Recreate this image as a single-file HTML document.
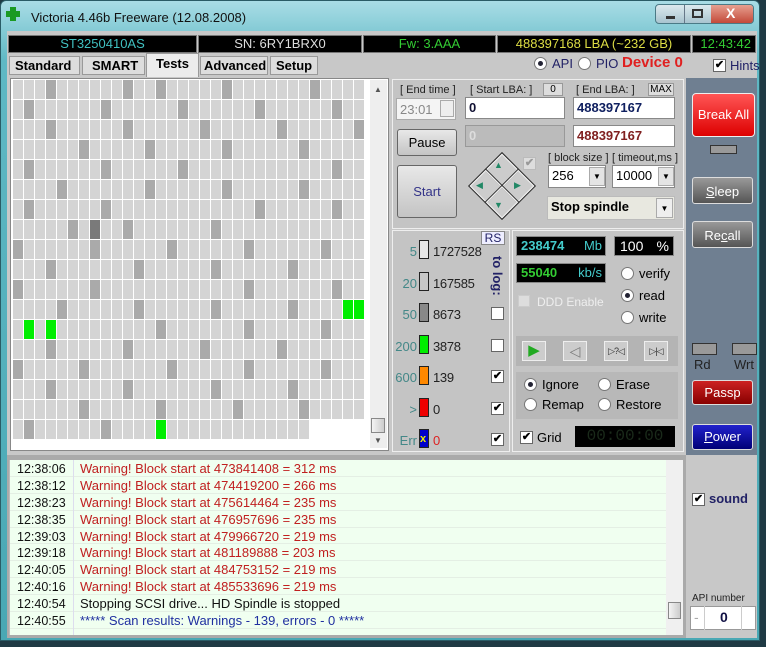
<!DOCTYPE html>
<html><head><meta charset="utf-8"><style>
*{box-sizing:border-box;margin:0;padding:0}
body{width:766px;height:647px;overflow:hidden;background:#1f3a44;font-family:"Liberation Sans",sans-serif;font-size:12px;position:relative}
.a{position:absolute;white-space:nowrap}
.blk{position:absolute;background:#000;border:1px solid #777;height:18px;top:35px;font-size:13px;text-align:center;line-height:16px}
.btn{position:absolute;background:linear-gradient(#e8e8e8,#c4c4c4);border:1px solid #666;border-radius:3px;text-align:center;color:#000}
.inp{position:absolute;background:#fff;border:1px solid #888;font-weight:bold;font-size:13px;padding-left:3px;line-height:20px}
.cb{position:absolute;width:13px;height:13px;background:#fff;border:1px solid #666;font-size:11px;line-height:11px;text-align:center;font-weight:bold}
.rd{position:absolute;width:13px;height:13px;background:#fff;border:1px solid #777;border-radius:50%}
.rd.on::after{content:"";position:absolute;left:3px;top:3px;width:5px;height:5px;border-radius:50%;background:#223}
.rbtn{position:absolute;border:1px solid #ddd;border-radius:3px;text-align:center;color:#fff;font-size:13px;line-height:27px;width:61px;left:692px}
.log div{height:16.9px;line-height:17px;border-bottom:1px solid #e4efe4;font-size:13px;white-space:nowrap}
.log span{display:inline-block;width:70px;padding-left:7px;color:#111;font-size:12.5px}
.ic{position:absolute;top:341px;width:24px;height:20px;background:#ccc;border:1px solid #eee;color:#333;font-size:9px;line-height:18px;text-align:center;white-space:nowrap;letter-spacing:-1px}
</style></head><body>
<div class="a" style="left:0;top:0;width:760px;height:641px;background:linear-gradient(#a9dde6,#5fb8c4 60px,#49a8b4);border-radius:6px 6px 0 0;border:1px solid #2a5c66"></div>
<div class="a" style="left:6px;top:7px;width:14px;height:14px">
<div class="a" style="left:4px;top:0;width:6px;height:14px;background:#1a9a22"></div>
<div class="a" style="left:0;top:4px;width:14px;height:6px;background:#1a9a22"></div></div>
<div class="a" style="left:31px;top:10px;font-size:13px;color:#111">Victoria 4.46b Freeware (12.08.2008)</div>
<div class="a" style="left:655px;top:4px;width:99px;height:20px;border:1px solid #4a7a86;border-radius:4px;background:linear-gradient(#dce9ee,#a8c4cf);overflow:hidden">
<div class="a" style="left:28px;top:0;width:1px;height:20px;background:#678"></div>
<div class="a" style="left:55px;top:0;width:44px;height:20px;background:linear-gradient(#e6a090,#c04030)"></div>
<div class="a" style="left:10px;top:11px;width:9px;height:3px;background:#333"></div>
<div class="a" style="left:36px;top:4px;width:11px;height:9px;border:2px solid #333"></div>
<div class="a" style="left:70px;top:0;color:#fff;font-weight:bold;font-size:14px">X</div></div>
<div class="a" style="left:7px;top:31px;width:750px;height:607px;background:#c8c8c8"></div>
<div class="blk" style="left:8px;width:189px;color:#40c0c0">ST3250410AS</div>
<div class="blk" style="left:198px;width:164px;color:#ddd">SN: 6RY1BRX0</div>
<div class="blk" style="left:363px;width:133px;color:#3c3">Fw: 3.AAA</div>
<div class="blk" style="left:497px;width:194px;color:#dd4">488397168 LBA (~232 GB)</div>
<div class="blk" style="left:692px;width:64px;color:#3c3;text-align:right;padding-right:4px">12:43:42</div>
<div class="a" style="left:9px;top:56px;width:71px;height:19px;border:1px solid #999;background:#ddd;font-weight:bold;font-size:13px;line-height:18px;padding-left:5px">Standard</div>
<div class="a" style="left:82px;top:56px;width:63px;height:19px;border:1px solid #999;background:#ddd;font-weight:bold;font-size:13px;line-height:18px;padding-left:9px">SMART</div>
<div class="a" style="left:146px;top:53px;width:53px;height:24px;border:1px solid #999;border-bottom:none;background:#ececec;font-weight:bold;font-size:13px;line-height:20px;padding-left:9px">Tests</div>
<div class="a" style="left:200px;top:56px;width:68px;height:19px;border:1px solid #999;background:#ddd;font-weight:bold;font-size:13px;line-height:18px;padding-left:3px">Advanced</div>
<div class="a" style="left:270px;top:56px;width:48px;height:19px;border:1px solid #999;background:#ddd;font-weight:bold;font-size:13px;line-height:18px;padding-left:5px">Setup</div>
<div class="rd on" style="left:534px;top:57px"></div><div class="a" style="left:552px;top:56px;color:#226;font-size:13px">API</div>
<div class="rd" style="left:578px;top:57px"></div><div class="a" style="left:596px;top:56px;color:#226;font-size:13px">PIO</div>
<div class="a" style="left:622px;top:54px;color:#e02020;font-weight:bold;font-size:15px">Device 0</div>
<div class="cb" style="left:713px;top:59px">✔</div><div class="a" style="left:730px;top:58px;color:#226;font-size:13px">Hints</div>
<div class="a" style="left:10px;top:78px;width:379px;height:373px;border:1px solid #888;background:#fff"></div>
<div id="grid" class="a" style="left:13px;top:80px;width:356px;height:368px;background:#fff"></div>
<div class="a" style="left:370px;top:80px;width:17px;height:368px;background:#eee"></div>
<div class="a" style="left:374px;top:85px;font-size:8px;color:#555">▲</div>
<div class="a" style="left:371px;top:418px;width:14px;height:15px;border:1px solid #888;background:linear-gradient(90deg,#f4f4f4,#ccc)"></div>
<div class="a" style="left:374px;top:436px;font-size:8px;color:#555">▼</div>
<div class="a" style="left:392px;top:79px;width:292px;height:150px;border:1px solid #eee;background:#c4c4c4"></div>
<div class="a" style="left:400px;top:84px;font-size:11px;color:#222">[ End time ]</div>
<div class="a" style="left:396px;top:98px;width:60px;height:22px;background:#f4f4f4;border:1px solid #aaa;color:#888;font-size:13px;padding:3px 0 0 3px">23:01</div>
<div class="a" style="left:440px;top:100px;width:14px;height:17px;border:1px solid #aaa;background:#eee"></div>
<div class="a" style="left:470px;top:84px;font-size:11px;color:#222">[ Start LBA: ]</div>
<div class="a" style="left:543px;top:83px;width:20px;height:13px;background:#ddd;border:1px solid #999;font-size:10px;text-align:center">0</div>
<div class="inp" style="left:465px;top:97px;width:100px;height:22px;color:#113">0</div>
<div class="inp" style="left:465px;top:125px;width:100px;height:22px;background:#bbb;color:#ddd;border-color:#999">0</div>
<div class="a" style="left:576px;top:84px;font-size:11px;color:#222">[ End LBA: ]</div>
<div class="a" style="left:648px;top:83px;width:26px;height:13px;background:#ddd;border:1px solid #999;font-size:10px;text-align:center">MAX</div>
<div class="inp" style="left:573px;top:97px;width:102px;height:22px;color:#102060">488397167</div>
<div class="inp" style="left:573px;top:125px;width:102px;height:22px;color:#802020">488397167</div>
<div class="btn" style="left:397px;top:129px;width:60px;height:27px;line-height:25px;font-size:13px">Pause</div>
<div class="btn" style="left:397px;top:165px;width:60px;height:53px;line-height:51px;font-size:13px;color:#338">Start</div>
<div class="a" style="left:478px;top:162px;width:48px;height:48px;transform:rotate(45deg);border:1px solid #222;background:#ccc;display:grid;grid-template-columns:1fr 1fr">
<div style="border:1px solid #fff;outline:1px solid #333"></div><div style="border:1px solid #fff;outline:1px solid #333"></div><div style="border:1px solid #fff;outline:1px solid #333"></div><div style="border:1px solid #fff;outline:1px solid #333"></div></div>
<div class="a" style="left:494px;top:160px;color:#286;font-size:9px">▲</div>
<div class="a" style="left:494px;top:200px;color:#286;font-size:9px">▼</div>
<div class="a" style="left:476px;top:180px;color:#286;font-size:9px">◀</div>
<div class="a" style="left:514px;top:180px;color:#286;font-size:9px">▶</div>
<div class="cb" style="left:523px;top:157px;background:#ddd;border-color:#bbb;color:#999">✔</div>
<div class="a" style="left:548px;top:152px;font-size:11px;color:#222">[ block size ]</div>
<div class="a" style="left:612px;top:152px;font-size:11px;color:#222">[ timeout,ms ]</div>
<div class="inp" style="left:548px;top:165px;width:58px;height:23px;font-weight:normal">256</div>
<div class="a" style="left:589px;top:167px;width:16px;height:19px;background:#e4e4e4;border:1px solid #aaa;font-size:8px;text-align:center;line-height:18px">▼</div>
<div class="inp" style="left:612px;top:165px;width:63px;height:23px;font-weight:normal">10000</div>
<div class="a" style="left:658px;top:167px;width:16px;height:19px;background:#e4e4e4;border:1px solid #aaa;font-size:8px;text-align:center;line-height:18px">▼</div>
<div class="inp" style="left:547px;top:196px;width:128px;height:24px;background:#e8e8e0;border-color:#bbb">Stop spindle</div>
<div class="a" style="left:656px;top:198px;width:17px;height:20px;background:#eee;border:1px solid #aaa;font-size:8px;text-align:center;line-height:19px">▼</div>
<div class="a" style="left:392px;top:230px;width:118px;height:222px;border:1px solid #eee;background:#c4c4c4"></div>
<div class="a" style="left:481px;top:231px;width:24px;height:14px;border:1px solid #888;background:#eef;color:#226;font-size:12px;text-align:center;line-height:12px">RS</div>
<div class="a" style="top:256px;transform:rotate(90deg);transform-origin:left top;left:505px;font-weight:bold;font-size:13px;color:#226">to log:</div>
<div id="leg"></div>
<div class="a" style="left:512px;top:230px;width:172px;height:222px;border:1px solid #eee;background:#c4c4c4"></div>
<div class="a" style="left:516px;top:236px;width:90px;height:20px;background:#000;border:1px solid #888;color:#4cc;font-weight:bold;font-size:13px;padding-left:4px;line-height:18px">238474<span style="float:right;padding-right:3px;font-weight:normal">Mb</span></div>
<div class="a" style="left:614px;top:236px;width:60px;height:20px;background:#000;border:1px solid #888;color:#fff;font-size:14px;padding-left:5px;line-height:18px">100 <span style="float:right;padding-right:4px">%</span></div>
<div class="a" style="left:516px;top:263px;width:90px;height:20px;background:#000;border:1px solid #888;color:#3c3;font-weight:bold;font-size:13px;padding-left:4px;line-height:18px">55040<span style="float:right;padding-right:3px;font-weight:normal;color:#4cc">kb/s</span></div>
<div class="a" style="left:518px;top:295px;width:12px;height:12px;background:#ddd;border:1px solid #ccc"></div>
<div class="a" style="left:537px;top:295px;color:#eee;font-size:12px">DDD Enable</div>
<div class="rd" style="left:621px;top:267px"></div><div class="a" style="left:639px;top:266px;font-size:13px">verify</div>
<div class="rd on" style="left:621px;top:289px"></div><div class="a" style="left:639px;top:288px;font-size:13px">read</div>
<div class="rd" style="left:621px;top:311px"></div><div class="a" style="left:639px;top:310px;font-size:13px">write</div>
<div class="a" style="left:516px;top:336px;width:162px;height:30px;background:#b4b4b4"></div>
<div class="ic" style="left:522px;color:#2a2;font-size:15px;letter-spacing:0">▶</div>
<div class="ic" style="left:563px;color:#777;font-size:14px;letter-spacing:0">◁</div>
<div class="ic" style="left:604px">▷?◁</div>
<div class="ic" style="left:644px">▷|◁</div>
<div class="a" style="left:516px;top:372px;width:162px;height:47px;background:#b8b8b8"></div>
<div class="rd on" style="left:524px;top:378px"></div><div class="a" style="left:542px;top:377px;font-size:13px">Ignore</div>
<div class="rd" style="left:598px;top:378px"></div><div class="a" style="left:616px;top:377px;font-size:13px">Erase</div>
<div class="rd" style="left:524px;top:398px"></div><div class="a" style="left:542px;top:397px;font-size:13px">Remap</div>
<div class="rd" style="left:598px;top:398px"></div><div class="a" style="left:616px;top:397px;font-size:13px">Restore</div>
<div class="cb" style="left:520px;top:431px">✔</div><div class="a" style="left:537px;top:430px;font-size:13px">Grid</div>
<div class="a" style="left:575px;top:426px;width:100px;height:21px;background:#000;color:#1a2a1a;font-family:'Liberation Mono',monospace;font-size:16px;text-align:center;line-height:21px">00:00:00</div>
<div class="a" style="left:686px;top:78px;width:71px;height:377px;background:#6f7f91"></div>
<div class="a" style="left:692px;top:93px;width:63px;height:44px;border:1px solid #eee;border-radius:4px;background:linear-gradient(#f55,#d00);color:#fff;font-size:13px;text-align:center;line-height:42px">Break All</div>
<div class="a" style="left:710px;top:145px;width:27px;height:9px;background:#999;border:1px solid #333"></div>
<div class="rbtn" style="top:177px;height:27px;background:linear-gradient(#999,#555)"><u>S</u>leep</div>
<div class="rbtn" style="top:221px;height:27px;background:linear-gradient(#999,#555)">Re<u>c</u>all</div>
<div class="a" style="left:692px;top:343px;width:25px;height:12px;background:#999;border:1px solid #333"></div>
<div class="a" style="left:732px;top:343px;width:25px;height:12px;background:#999;border:1px solid #333"></div>
<div class="a" style="left:694px;top:357px;color:#222;font-size:13px">Rd</div>
<div class="a" style="left:734px;top:357px;color:#222;font-size:13px">Wrt</div>
<div class="rbtn" style="top:380px;height:25px;line-height:23px;background:linear-gradient(#c22,#800)">Passp</div>
<div class="rbtn" style="top:424px;height:26px;line-height:24px;background:linear-gradient(#22c,#007)"><u>P</u>ower</div>
<div class="a" style="left:686px;top:455px;width:71px;height:183px;background:#c8c8c8"></div>
<div class="cb" style="left:692px;top:493px">✔</div><div class="a" style="left:709px;top:491px;font-weight:bold;font-size:13px;color:#226">sound</div>
<div class="a" style="left:692px;top:593px;font-size:10px;color:#222">API number</div>
<div class="a" style="left:690px;top:606px;width:66px;height:24px;background:#fff;border:1px solid #999"></div>
<div class="a" style="left:694px;top:609px;color:#aaa;font-size:14px">-</div>
<div class="a" style="left:720px;top:609px;font-weight:bold;font-size:14px;color:#114">0</div>
<div class="a" style="left:704px;top:606px;width:1px;height:24px;background:#ccc"></div>
<div class="a" style="left:741px;top:606px;width:1px;height:24px;background:#ccc"></div>
<div class="a" style="left:7px;top:455px;width:679px;height:183px;background:#aaa"></div>
<div class="a log" style="left:9px;top:460px;width:664px;height:175px;background:#f0fff0;border-left:1px solid #bbb;overflow:hidden">
<div><span>12:38:06</span><b style="font-weight:normal;color:#c02020">Warning! Block start at 473841408 = 312 ms</b></div>
<div><span>12:38:12</span><b style="font-weight:normal;color:#c02020">Warning! Block start at 474419200 = 266 ms</b></div>
<div><span>12:38:23</span><b style="font-weight:normal;color:#c02020">Warning! Block start at 475614464 = 235 ms</b></div>
<div><span>12:38:35</span><b style="font-weight:normal;color:#c02020">Warning! Block start at 476957696 = 235 ms</b></div>
<div><span>12:39:03</span><b style="font-weight:normal;color:#c02020">Warning! Block start at 479966720 = 219 ms</b></div>
<div><span>12:39:18</span><b style="font-weight:normal;color:#c02020">Warning! Block start at 481189888 = 203 ms</b></div>
<div><span>12:40:05</span><b style="font-weight:normal;color:#c02020">Warning! Block start at 484753152 = 219 ms</b></div>
<div><span>12:40:16</span><b style="font-weight:normal;color:#c02020">Warning! Block start at 485533696 = 219 ms</b></div>
<div><span>12:40:54</span><b style="font-weight:normal;color:#111">Stopping SCSI drive... HD Spindle is stopped</b></div>
<div><span>12:40:55</span><b style="font-weight:normal;color:#2030a0">***** Scan results: Warnings - 139, errors - 0 *****</b></div>
</div>
<div class="a" style="left:73px;top:460px;width:1px;height:175px;background:#dde"></div>
<div class="a" style="left:666px;top:460px;width:17px;height:175px;background:#f0f0f0"></div>
<div class="a" style="left:668px;top:602px;width:13px;height:17px;border:1px solid #888;background:linear-gradient(90deg,#f4f4f4,#ccc)"></div>
<script>
var dark={0:[3,10,13,19,27],1:[1,8,15,22,29],2:[3,10,17,24,31],3:[6,12,19,26],4:[1,8,15,29],5:[4,12,19,26],6:[1,8,22,29],7:[5,10,18],8:[0,7,14,21,28],9:[3,11,18,25],10:[0,7,21,29],11:[4,11,18,25],12:[13,21,28],13:[3,10,17,24],14:[0,6,14,21,28],15:[3,10,18,25],16:[6,13,20,26],17:[1,8]};
var green={11:[30,31],12:[1,3],17:[13]};
var h='';
for(var r=0;r<18;r++){var n=r==17?27:32;for(var c=0;c<n;c++){var col='#d4d4d4';if(dark[r]&&dark[r].indexOf(c)>=0)col='#aaa';if(r==7&&c==7)col='#7a7a7a';if(green[r]&&green[r].indexOf(c)>=0)col='#00ee00';
h+='<div style="position:absolute;left:'+(c*11)+'px;top:'+(r*20)+'px;width:10px;height:19px;background:'+col+'"></div>';}}
document.getElementById('grid').innerHTML=h;
var L=[['5','#e8e8e8','1727528','#222',''],['20','#c8c8c8','167585','#222',''],['50','#888','8673','#222','e'],['200','#0e0','3878','#222','e'],['600','#f80','139','#222','c'],['>','#e00','0','#222','c'],['Err','#00c','0','#d22','c']];
var g='';
for(var i=0;i<L.length;i++){var y=240+i*31.5;
g+='<div class="a" style="left:393px;top:'+(y+4)+'px;width:24px;text-align:right;color:#488;font-size:13px">'+L[i][0]+'</div>';
g+='<div class="a" style="left:419px;top:'+y+'px;width:10px;height:19px;background:'+L[i][1]+';border:1px solid #222">'+(i==6?'<span style="color:#ee0;font-size:11px;font-weight:bold;position:absolute;left:0;top:3px">x</span>':'')+'</div>';
g+='<div class="a" style="left:433px;top:'+(y+4)+'px;color:'+L[i][3]+';font-size:13px;letter-spacing:-0.3px">'+L[i][2]+'</div>';
if(L[i][4])g+='<div class="cb" style="left:491px;top:'+(y+4)+'px">'+(L[i][4]=='c'?'✔':'')+'</div>';}
document.getElementById('leg').innerHTML=g;
</script>
</body></html>
